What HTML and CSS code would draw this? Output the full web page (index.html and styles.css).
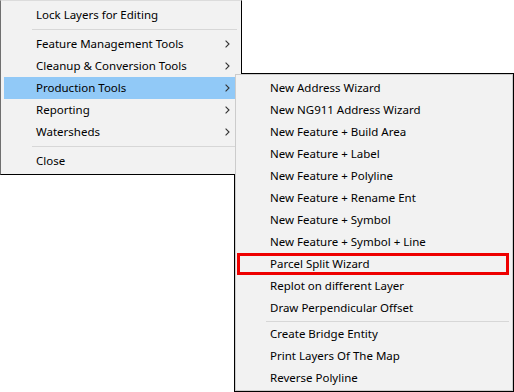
FILE: index.html
```html
<!DOCTYPE html>
<html lang="en">
<head>
    <meta charset="UTF-8">
    <title>Context Menu</title>
    <link rel="stylesheet" href="styles.css">
</head>
<body>
    <div class="desk">
        <div class="menu main-menu">
            <div class="item">Lock Layers for Editing</div>
            <div class="separator"></div>
            <div class="item">Feature Management Tools
                <svg class="chevron" width="5" height="8" viewBox="0 0 5 8"><polyline points="0.6,0.6 4,4 0.6,7.4" /></svg>
            </div>
            <div class="item">Cleanup &amp; Conversion Tools
                <svg class="chevron" width="5" height="8" viewBox="0 0 5 8"><polyline points="0.6,0.6 4,4 0.6,7.4" /></svg>
            </div>
            <div class="item active">Production Tools
                <svg class="chevron" width="5" height="8" viewBox="0 0 5 8"><polyline points="0.6,0.6 4,4 0.6,7.4" /></svg>
            </div>
            <div class="item">Reporting
                <svg class="chevron" width="5" height="8" viewBox="0 0 5 8"><polyline points="0.6,0.6 4,4 0.6,7.4" /></svg>
            </div>
            <div class="item">Watersheds
                <svg class="chevron" width="5" height="8" viewBox="0 0 5 8"><polyline points="0.6,0.6 4,4 0.6,7.4" /></svg>
            </div>
            <div class="separator"></div>
            <div class="item">Close</div>
        </div>

        <div class="menu sub-menu">
            <div class="item">New Address Wizard</div>
            <div class="item">New NG911 Address Wizard</div>
            <div class="item">New Feature + Build Area</div>
            <div class="item">New Feature + Label</div>
            <div class="item">New Feature + Polyline</div>
            <div class="item">New Feature + Rename Ent</div>
            <div class="item">New Feature + Symbol</div>
            <div class="item">New Feature + Symbol + Line</div>
            <div class="item marked">Parcel Split Wizard</div>
            <div class="item">Replot on different Layer</div>
            <div class="item">Draw Perpendicular Offset</div>
            <div class="separator short"></div>
            <div class="item">Create Bridge Entity</div>
            <div class="item">Print Layers Of The Map</div>
            <div class="item">Reverse Polyline</div>
        </div>
    </div>
</body>
</html>
```

FILE: styles.css
```css
body {
    margin: 0;
    background-color: #ffffff;
    font-family: 'Noto Sans', 'Open Sans', sans-serif;
    font-size: 11.5px;
    color: #000;
}

.desk {
    position: relative;
    width: 514px;
    height: 392px;
}

.menu {
    box-sizing: border-box;
    background-color: #f2f2f2;
}

.main-menu {
    width: 242px;
    height: 175px;
    padding: 3px 3px 2px 3px;
    border-style: solid;
    border-width: 1px;
    border-color: #dcdcdc #000 #000 #6f6f6f;
}

.sub-menu {
    position: absolute;
    left: 235px;
    top: 74px;
    width: 278px;
    height: 317px;
    padding: 2px 2px 0 2px;
    border: 1px solid #cccccc;
}

/* black outline of the popup, kept behind the parent menu */
.sub-menu::before {
    content: "";
    position: absolute;
    top: -2px;
    left: -2px;
    right: -2px;
    bottom: -2px;
    background-color: #000;
    z-index: -1;
}

.item {
    position: relative;
    display: flex;
    align-items: center;
    justify-content: space-between;
    box-sizing: border-box;
    height: 22px;
    padding: 0 8px 1px 32px;
    white-space: nowrap;
}

.item.active {
    background-color: #91c9f7;
}

.chevron {
    fill: none;
    stroke: #333;
    stroke-width: 1.1;
}

.separator {
    height: 1px;
    margin: 3px 1px 3px 28px;
    background-color: #d7d7d7;
}

.separator.short {
    margin: 2px 1px 1px 28px;
}

.item.marked::after {
    content: "";
    position: absolute;
    top: 0;
    left: -1px;
    right: 1px;
    bottom: 0;
    border: 3px solid #ee0000;
}
```
